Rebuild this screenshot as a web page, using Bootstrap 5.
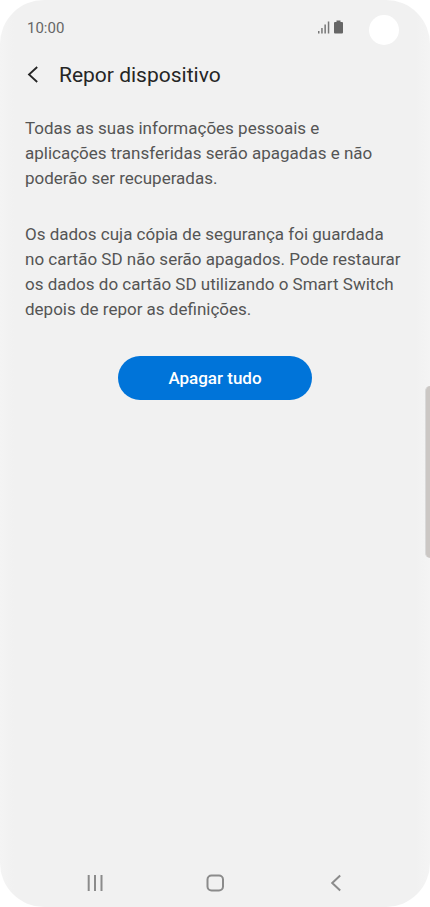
<!DOCTYPE html>
<html lang="pt">
<head>
<meta charset="utf-8">
<meta name="viewport" content="width=device-width, initial-scale=1">
<title>Repor dispositivo</title>
<link href="https://cdn.jsdelivr.net/npm/bootstrap@5.3.0/dist/css/bootstrap.min.css" rel="stylesheet">
<style>
body { font-family: Roboto, "Liberation Sans", sans-serif; background: #fff; }
.phone { min-height: 100vh; border-radius: 44px; background: linear-gradient(90deg, #f4f4f4, #f1f1f1 14px, #f1f1f1 calc(100% - 14px), #f4f4f4); }
.status { height: 60px; padding: 0 31px 0 27px; color: #666; font-size: 15px; line-height: 20px; }
.clock { margin-top: 18px; }
.signals { gap: 4px; margin-top: 20px; }
.camera { width: 30px; height: 30px; margin: 15px 0 0 26px; background: #fff; }
.title-bar { gap: 20px; padding: 0 25px; height: 30px; }
.title-bar h1 { font-size: 21px; line-height: 30px; font-weight: 400; color: #252525; }
.icon-btn { border: 0; padding: 0; background: none; }
.message { padding: 26px 24px 0 25px; color: #555; font-size: 17px; line-height: 25px; }
.message p { margin-bottom: 31px; }
.btn-erase { --bs-btn-bg: #0074d9; --bs-btn-color: #fff; --bs-btn-hover-bg: #0067c4; --bs-btn-hover-color: #fff; width: 45%; height: 44px; padding: 0; border: 0; font-size: 17px; font-weight: 500; line-height: 44px; margin-top: 3px; }
.edge-handle { top: 386px; width: 5px; height: 172px; border-radius: 5px 0 0 5px; background: #cbc7c4; border-left: 1px solid #d9d9d9; }
.nav-keys { padding: 0 80px 9px; }
.nav-keys button { width: 30px; height: 30px; }
</style>
<script src="https://cdn.jsdelivr.net/npm/bootstrap@5.3.0/dist/js/bootstrap.bundle.min.js"></script>
</head>
<body>
<div class="phone position-relative d-flex flex-column overflow-hidden">
  <header>
    <div class="status d-flex align-items-start">
      <span class="clock me-auto">10:00</span>
      <div class="signals d-flex">
        <svg width="12" height="14" viewBox="0 0 12 14" fill="#777" aria-hidden="true"><path d="M0 11h1.500v2.500H0zM3.200 8h1.500v5.500H3.200zM6.400 4.500h1.500v9H6.400zM9.800 1.500h1.500v12H9.800z"/></svg>
        <svg width="9" height="14" viewBox="0 0 9 14" fill="#666" aria-hidden="true"><path d="M2.500.5h4v1.500H8q1 0 1 1v9.500q0 1-1 1H1q-1 0-1-1V3q0-1 1-1h1.500z"/></svg>
      </div>
      <div class="camera rounded-circle"></div>
    </div>
    <div class="title-bar d-flex align-items-center">
      <button class="icon-btn d-flex" type="button" aria-label="Voltar"><svg width="14" height="18" viewBox="0 0 14 18" fill="none" stroke="#252525" stroke-width="1.800"><path d="M12.200 1 4 8.500l8.200 7.500"/></svg></button>
      <h1 class="m-0">Repor dispositivo</h1>
    </div>
  </header>
  <main class="flex-grow-1">
    <div class="message">
      <p>Todas as suas informações pessoais e<br>aplicações transferidas serão apagadas e não<br>poderão ser recuperadas.</p>
      <p>Os dados cuja cópia de segurança foi guardada no cartão SD não serão apagados. Pode restaurar os dados do cartão SD utilizando o Smart Switch depois de repor as definições.</p>
    </div>
    <div class="text-center"><button class="btn btn-erase rounded-pill" type="button">Apagar tudo</button></div>
  </main>
  <div class="edge-handle position-absolute end-0"></div>
  <nav class="nav-keys d-flex justify-content-between" aria-label="Sistema">
    <button class="icon-btn d-flex" type="button" aria-label="Recentes"><svg width="30" height="30" viewBox="0 0 30 30" stroke="#8b8b8b" stroke-width="2"><path d="M8.700 7v16M15 7v16M21.500 7v16"/></svg></button>
    <button class="icon-btn d-flex" type="button" aria-label="Início"><svg width="30" height="30" viewBox="0 0 30 30" fill="none" stroke="#8b8b8b" stroke-width="2"><rect x="7.500" y="7.500" width="15.500" height="15" rx="4"/></svg></button>
    <button class="icon-btn d-flex" type="button" aria-label="Retroceder"><svg width="30" height="30" viewBox="0 0 30 30" fill="none" stroke="#8b8b8b" stroke-width="2"><path d="M20.200 7.500 12.200 15l8 7.500"/></svg></button>
  </nav>
</div>
</body>
</html>
